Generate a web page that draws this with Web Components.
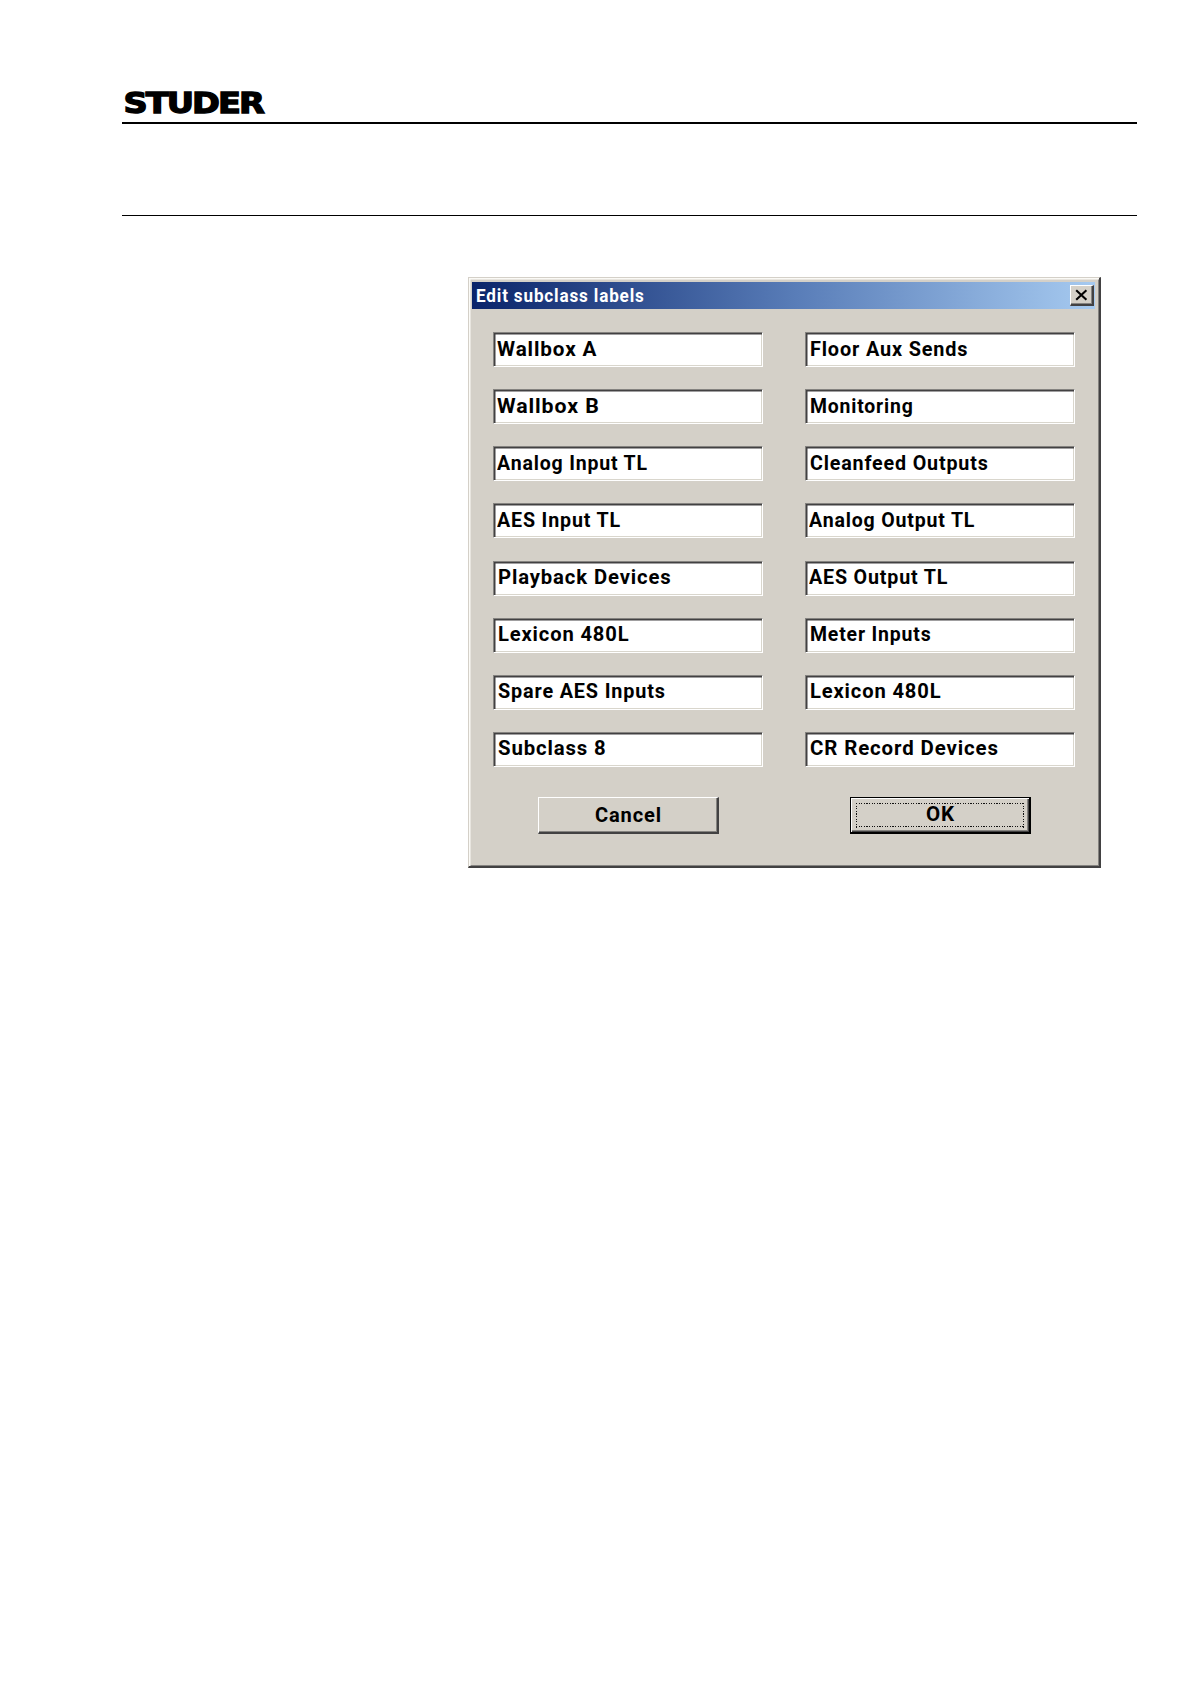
<!DOCTYPE html>
<html lang="en">
<head>
<meta charset="utf-8">
<title>Edit subclass labels</title>
<style>
body { margin: 0; background: #fff; }
</style>
</head>
<body>
<manual-page>
  <studer-logo slot="head"></studer-logo>
  <win-dialog heading="Edit subclass labels">
    <label-field w="99.5">Wallbox A</label-field>
    <label-field w="101.5">Wallbox B</label-field>
    <label-field w="150.5">Analog Input TL</label-field>
    <label-field w="123.5">AES Input TL</label-field>
    <label-field w="173" inset="1">Playback Devices</label-field>
    <label-field w="130.5" inset="1">Lexicon 480L</label-field>
    <label-field w="167" inset="1">Spare AES Inputs</label-field>
    <label-field w="107.5" inset="1">Subclass 8</label-field>
    <label-field slot="right" w="158" inset="1">Floor Aux Sends</label-field>
    <label-field slot="right" w="102.5" inset="1">Monitoring</label-field>
    <label-field slot="right" w="178" inset="0.5">Cleanfeed Outputs</label-field>
    <label-field slot="right" w="165.5">Analog Output TL</label-field>
    <label-field slot="right" w="138.5">AES Output TL</label-field>
    <label-field slot="right" w="120.5" inset="1">Meter Inputs</label-field>
    <label-field slot="right" w="130.5" inset="1">Lexicon 480L</label-field>
    <label-field slot="right" w="188" inset="0.5">CR Record Devices</label-field>
    <push-button slot="actions" w="66">Cancel</push-button>
    <push-button slot="actions" w="28.5" primary>OK</push-button>
  </win-dialog>
</manual-page>
<script>
function define(name, html, setup) {
  const t = document.createElement('template');
  t.innerHTML = html;
  customElements.define(name, class extends HTMLElement {
    connectedCallback() {
      if (this.shadowRoot) return;
      this.attachShadow({ mode: 'open' }).append(t.content.cloneNode(true));
      if (setup) setup(this, this.shadowRoot);
    }
  });
}

define('fit-text', `
<style>
:host { display: block; white-space: nowrap; line-height: 1; }
span { display: inline-block; transform-origin: 0 50%; letter-spacing: .9px; }
</style><span></span>`, (el, root) => {
  const s = root.querySelector('span');
  s.textContent = el.getAttribute('text');
  const w = parseFloat(el.getAttribute('w'));
  const natural = s.offsetWidth - 0.9;
  el.style.width = w + 'px';
  s.style.transform = 'scaleX(' + (w / natural) + ')';
});

define('studer-logo', `
<style>
:host { display: block; width: 160px; height: 36px; margin: -6px 0 -5px; }
svg { display: block; }
text { font: bold 28px "DejaVu Sans", sans-serif; stroke: #000; stroke-width: 1.3px; stroke-linejoin: miter; }
</style>
<svg width="160" height="36"><text x="1.5" y="28.3" textLength="139.5" lengthAdjust="spacingAndGlyphs" letter-spacing="-1.6">STUDER</text></svg>`);

define('manual-page', `
<style>
:host { display: flex; flex-direction: column; box-sizing: border-box; width: 1190px; height: 1684px; padding: 91px 53px 0 122px; background: #fff; }
header { display: flex; flex-direction: column; height: 31px; border-bottom: 2px solid #000; }
.rule { height: 91px; border-bottom: 1px solid #000; }
main { display: flex; padding: 61px 0 0 346px; }
</style>
<header><slot name="head"></slot></header>
<div class="rule"></div>
<main><slot></slot></main>`);

define('win-dialog', `
<style>
:host { display: flex; flex-direction: column; box-sizing: border-box; width: 633px; height: 591px; background: #d4d0c8;
  border: 1px solid #d4d0c8; border-right: 2px solid #424142; border-bottom: 2px solid #424142;
  box-shadow: inset 1.5px 1.5px 0 #fbfaf6, inset -1px -1px 0 #858380; padding: 4px 4px 0 3px; }
.bar { display: flex; align-items: center; justify-content: space-between; box-sizing: border-box; height: 27px; flex: none; padding: 0 1px 0 4px;
  background: linear-gradient(90deg, #0a246a, #597db8 52%, #a6caf0); }
fit-text { font: bold 18.3px Roboto, sans-serif; color: #fff; padding-bottom: 1px; }
.x { display: flex; align-items: center; justify-content: center; box-sizing: border-box; width: 24px; height: 21px; background: #d4d0c8;
  border: 1.5px solid #fff; border-right: 2px solid #424142; border-bottom: 2px solid #424142; box-shadow: inset -1px -1px 0 #858380; }
.cols { display: flex; justify-content: space-between; padding: 23px 20px 0 21px; height: 435px; }
.col { display: flex; flex-direction: column; justify-content: space-between; width: 270px; }
.acts { display: flex; gap: 131px; padding: 30px 0 0 66px; }
</style>
<div class="bar"><span id="t"></span><div class="x"><svg width="13" height="12" viewBox="0 0 13 12"><path d="M1.2 1.2L11.4 10.8M11.4 1.2L1.2 10.8" stroke="#000" stroke-width="2.1" fill="none"/></svg></div></div>
<div class="cols"><div class="col"><slot></slot></div><div class="col"><slot name="right"></slot></div></div>
<div class="acts"><slot name="actions"></slot></div>`, (el, root) => {
  const f = document.createElement('fit-text');
  f.setAttribute('text', el.getAttribute('heading'));
  f.setAttribute('w', '167.5');
  root.getElementById('t').append(f);
});

define('label-field', `
<style>
:host { display: flex; align-items: center; box-sizing: border-box; width: 270px; height: 35px; background: #fff; color: #000;
  border-top: 1px solid #858380; border-left: 1px solid #858380; border-right: 1px solid #fff; border-bottom: 1px solid #fff;
  box-shadow: inset 1.5px 1.5px 0 #424142, inset -1px -1px 0 #d9d6cd; padding: 0 0 1px 3px; font: bold 21px Roboto, sans-serif; }
</style>`, fitContent);

define('push-button', `
<style>
:host { display: flex; align-items: center; justify-content: center; box-sizing: border-box; width: 181px; height: 37px; background: #d4d0c8; color: #000;
  border: 1px solid #fff; border-right: 2px solid #424142; border-bottom: 2px solid #424142; box-shadow: inset -1px -1px 0 #858380;
  font: bold 21px Roboto, sans-serif; }
:host([primary]) { border: 1px solid #000; border-width: 1px 2px 2px 1px; padding: 0;
  box-shadow: inset 1px 1px 0 #fff, inset -1px -1px 0 #424142, inset -2px -2px 0 #858380; }
:host([primary]) fit-text { padding-bottom: 1px; }
.focus { display: flex; justify-content: center; align-items: center; box-sizing: border-box; }
:host([primary]) .focus { width: 169px; height: 25px;
  background: repeating-linear-gradient(90deg, #111 0 1.3px, #0000 1.3px 2.6px) 0 0/100% 1.3px no-repeat,
    repeating-linear-gradient(90deg, #111 0 1.3px, #0000 1.3px 2.6px) 0 100%/100% 1.3px no-repeat,
    repeating-linear-gradient(#111 0 1.3px, #0000 1.3px 2.6px) 0 0/1.3px 100% no-repeat,
    repeating-linear-gradient(#111 0 1.3px, #0000 1.3px 2.6px) 100% 0/1.3px 100% no-repeat; }
</style><div class="focus"></div>`, fitContent);

function fitContent(el, root) {
  const f = document.createElement('fit-text');
  f.setAttribute('text', el.textContent);
  f.setAttribute('w', el.getAttribute('w'));
  f.style.marginLeft = (el.getAttribute('inset') || 0) + 'px';
  (root.querySelector('.focus') || root).append(f);
}
</script>
</body>
</html>
